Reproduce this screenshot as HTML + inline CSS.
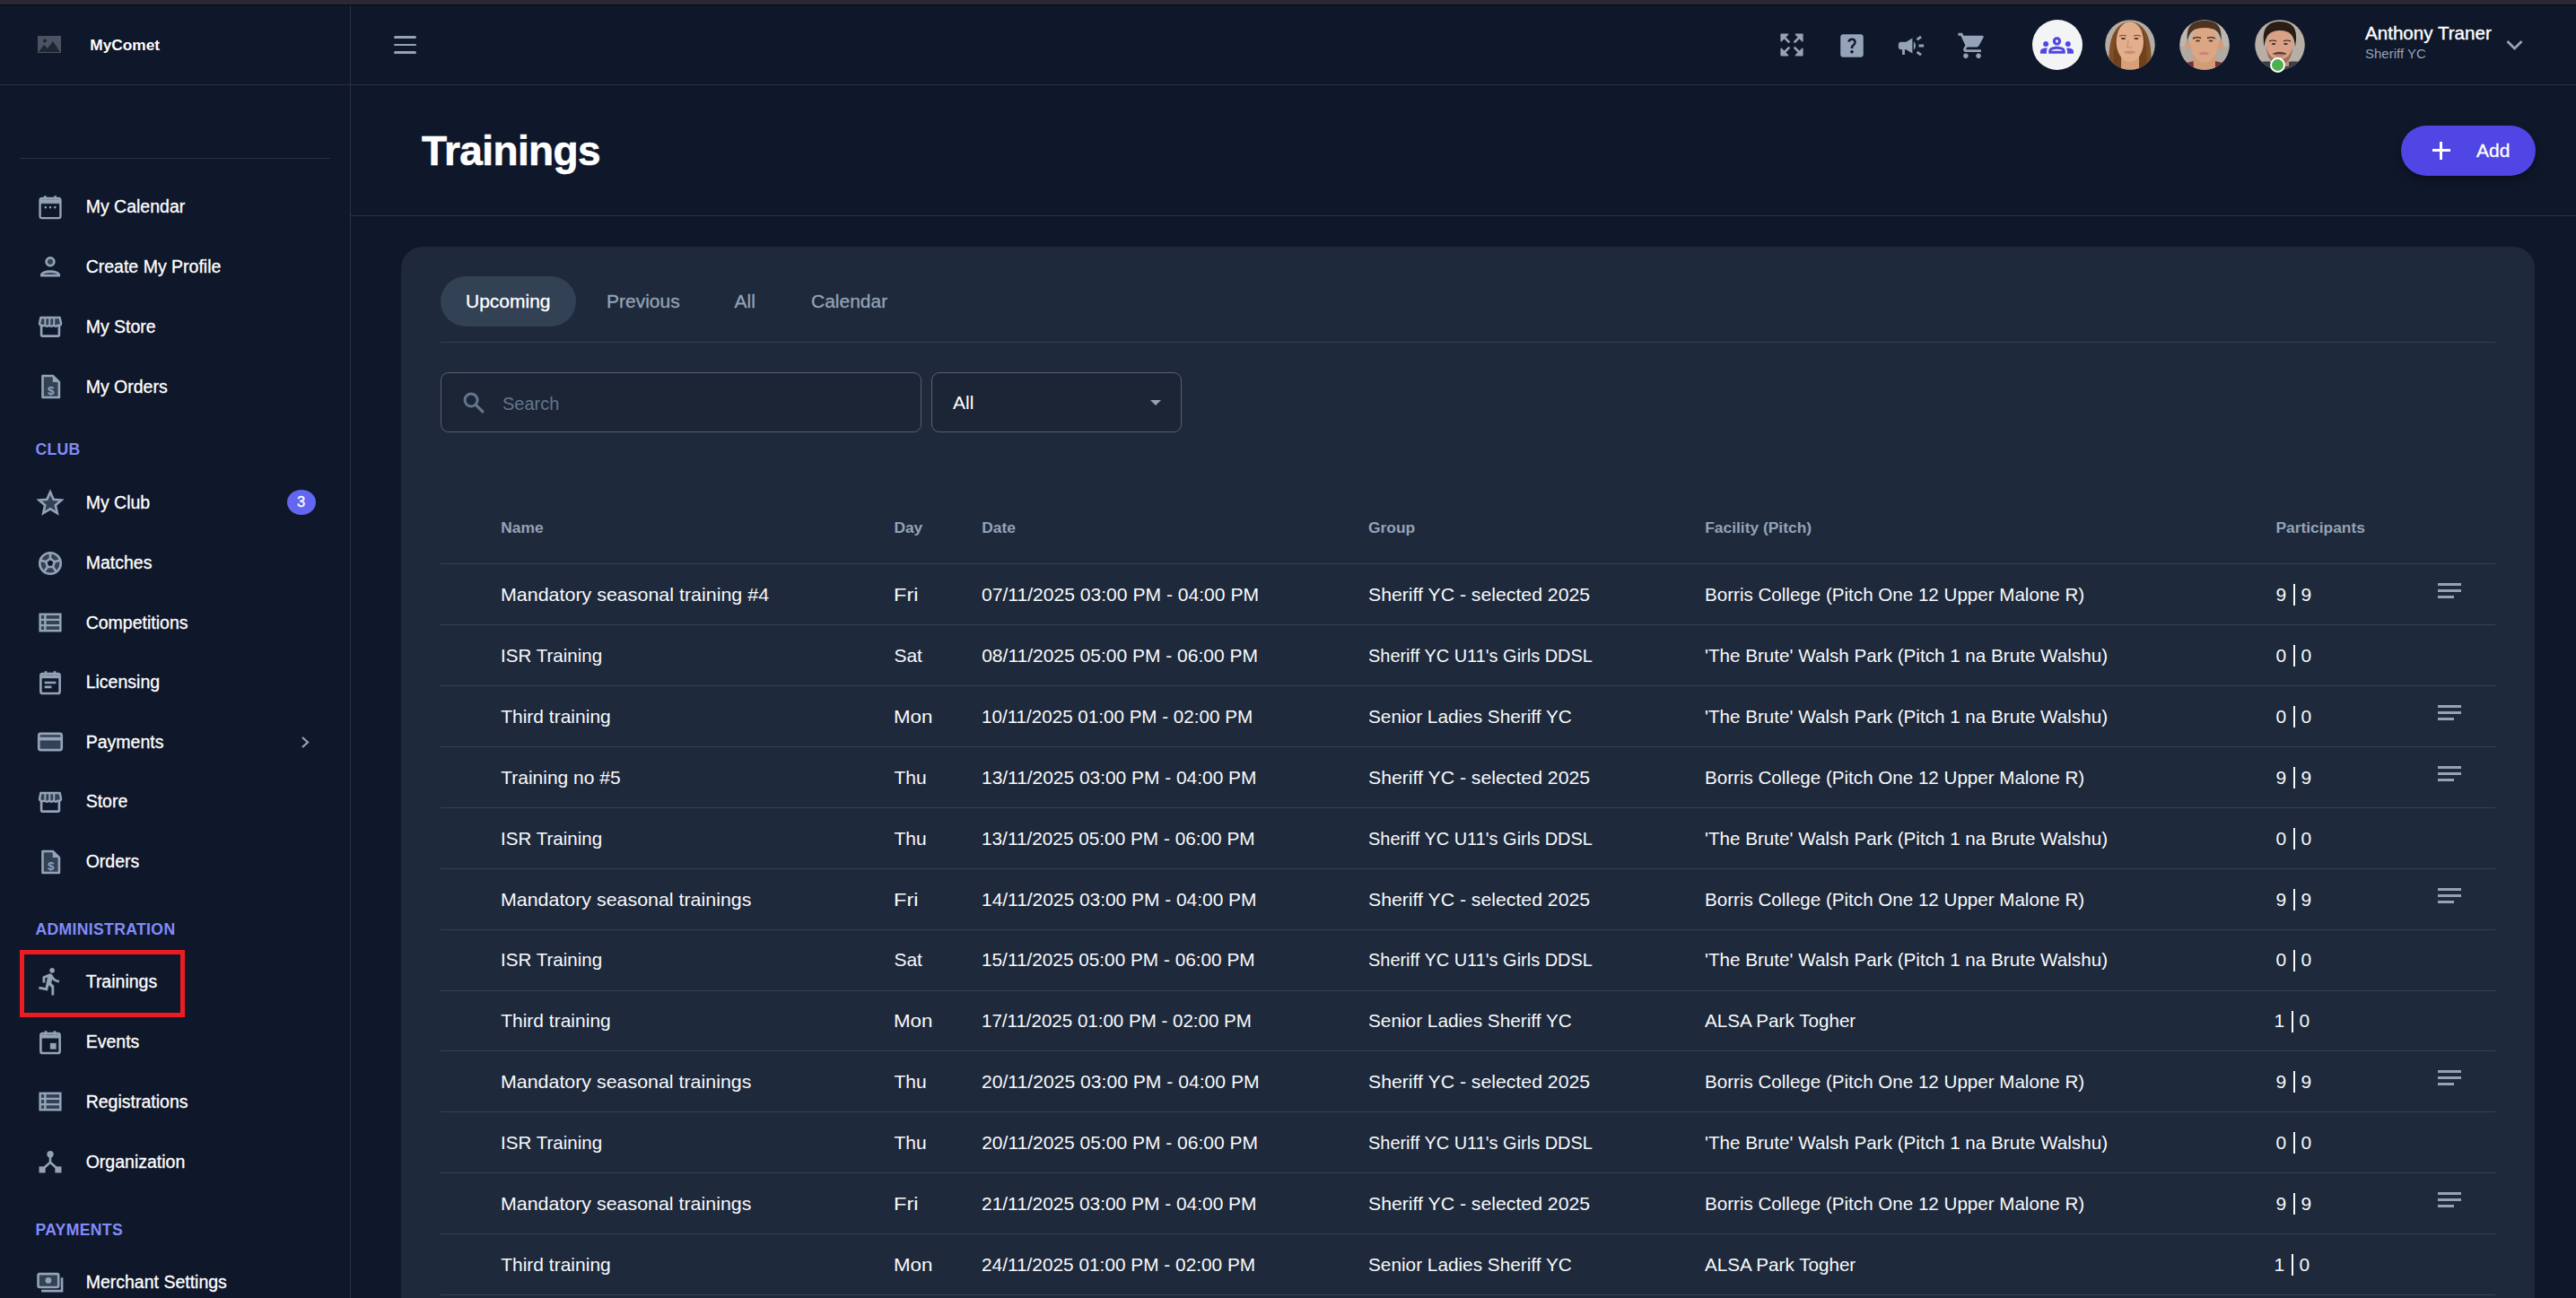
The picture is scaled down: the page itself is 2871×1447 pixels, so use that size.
<!DOCTYPE html>
<html><head><meta charset="utf-8"><title>Trainings</title>
<style>
html,body{margin:0;padding:0;}
html{width:2871px;height:1447px;overflow:hidden;background:#0f172a;}
body{width:2871px;height:1447px;overflow:hidden;background:#0f172a;position:relative;font-family:"Liberation Sans", sans-serif;}
.t{position:absolute;white-space:pre;line-height:1;font-family:"Liberation Sans", sans-serif;}
svg{overflow:visible}
</style></head><body>
<div style="position:absolute;left:0px;top:0px;width:2871px;height:5px;background:#2a2933"></div>
<div style="position:absolute;left:0px;top:5px;width:2871px;height:1px;background:#0a0a0c"></div>
<div style="position:absolute;left:390px;top:6px;width:1px;height:1441px;background:#2b3041"></div>
<div style="position:absolute;left:0px;top:94px;width:2871px;height:1px;background:#2b3041"></div>
<div style="position:absolute;left:22px;top:176px;width:346px;height:1px;background:#2b3041"></div>
<div style="position:absolute;left:391px;top:240px;width:2480px;height:1px;background:#2b3041"></div>
<svg style="position:absolute;left:42px;top:40px;" width="26" height="19" viewBox="0 0 26 19"><rect x="0" y="0" width="26" height="19" fill="#4b5262"/><circle cx="8" cy="5.5" r="2" fill="#1f2533"/><path d="M1 18 L7 10 L11 14 L17 6 L25 18 Z" fill="#1f2533"/></svg>
<div class="t" style="left:100.3px;top:42.09px;font-size:17.3px;color:#fff;font-weight:bold;">MyComet</div>
<div style="position:absolute;left:439px;top:40px;width:25px;height:2.6px;background:#94a3b8;border-radius:2px"></div>
<div style="position:absolute;left:439px;top:48.5px;width:25px;height:2.6px;background:#94a3b8;border-radius:2px"></div>
<div style="position:absolute;left:439px;top:57px;width:25px;height:2.6px;background:#94a3b8;border-radius:2px"></div>
<svg style="position:absolute;left:1983.6px;top:36.8px;" width="26" height="26" viewBox="0 0 26 26"><g transform=""><path d="M1.2 1.2 H8.6 L1.2 8.6 Z" fill="#94a3b8" stroke="#94a3b8" stroke-width="1.6" stroke-linejoin="round"/><path d="M2.5 2.5 L9.6 9.6" stroke="#94a3b8" stroke-width="2.7" stroke-linecap="round"/></g><g transform="translate(26 0) scale(-1 1)"><path d="M1.2 1.2 H8.6 L1.2 8.6 Z" fill="#94a3b8" stroke="#94a3b8" stroke-width="1.6" stroke-linejoin="round"/><path d="M2.5 2.5 L9.6 9.6" stroke="#94a3b8" stroke-width="2.7" stroke-linecap="round"/></g><g transform="translate(0 26) scale(1 -1)"><path d="M1.2 1.2 H8.6 L1.2 8.6 Z" fill="#94a3b8" stroke="#94a3b8" stroke-width="1.6" stroke-linejoin="round"/><path d="M2.5 2.5 L9.6 9.6" stroke="#94a3b8" stroke-width="2.7" stroke-linecap="round"/></g><g transform="translate(26 26) scale(-1 -1)"><path d="M1.2 1.2 H8.6 L1.2 8.6 Z" fill="#94a3b8" stroke="#94a3b8" stroke-width="1.6" stroke-linejoin="round"/><path d="M2.5 2.5 L9.6 9.6" stroke="#94a3b8" stroke-width="2.7" stroke-linecap="round"/></g></svg>
<svg style="position:absolute;left:2046.5px;top:33.6px;" width="34" height="34" viewBox="0 0 24 24"><path d="M19 3H5c-1.1 0-2 .9-2 2v14c0 1.1.9 2 2 2h14c1.1 0 2-.9 2-2V5c0-1.1-.9-2-2-2zm-6.99 15c-.7 0-1.26-.56-1.26-1.26 0-.71.56-1.25 1.26-1.25.71 0 1.25.54 1.25 1.25-.01.69-.54 1.26-1.25 1.26zm3.01-7.4c-.76 1.11-1.48 1.46-1.87 2.17-.16.29-.22.48-.22 1.41h-1.82c0-.49-.08-1.29.31-1.98.49-.87 1.42-1.39 1.96-2.16.57-.81.25-2.33-1.37-2.33-1.06 0-1.58.8-1.8 1.48l-1.65-.7C9.02 7.14 10.3 6 12.01 6c1.42 0 2.39.65 2.89 1.46.42.7.67 2.01.01 3.14z" fill="#94a3b8"/></svg>
<svg style="position:absolute;left:2113.2px;top:33.9px;" width="34" height="34" viewBox="0 0 24 24"><path d="M18 11v2h4v-2h-4zm-2 6.61c.96.71 2.21 1.65 3.2 2.39.4-.53.8-1.07 1.2-1.6-.99-.74-2.24-1.68-3.2-2.4-.4.54-.8 1.08-1.2 1.61zM20.4 5.6c-.4-.53-.8-1.07-1.2-1.6-.99.74-2.24 1.68-3.2 2.4.4.53.8 1.07 1.2 1.6.96-.72 2.21-1.65 3.2-2.4zM4 9c-1.1 0-2 .9-2 2v2c0 1.1.9 2 2 2h1v4h2v-4h1l5 3V6L8 9H4zm11.5 3c0-1.33-.58-2.53-1.5-3.35v6.69c.92-.81 1.5-2.01 1.5-3.34z" fill="#94a3b8"/></svg>
<svg style="position:absolute;left:2180.6px;top:34.2px;" width="34" height="34" viewBox="0 0 24 24"><path d="M7 18c-1.1 0-1.99.9-1.99 2S5.9 22 7 22s2-.9 2-2-.9-2-2-2zM1 2v2h2l3.6 7.59-1.35 2.45c-.16.28-.25.61-.25.96 0 1.1.9 2 2 2h12v-2H7.42c-.14 0-.25-.11-.25-.25l.03-.12.9-1.63h7.45c.75 0 1.41-.41 1.75-1.03l3.58-6.49c.08-.14.12-.31.12-.48 0-.55-.45-1-1-1H5.21l-.94-2H1zm16 16c-1.1 0-1.99.9-1.99 2s.89 2 1.99 2 2-.9 2-2-.9-2-2-2z" fill="#94a3b8"/></svg>
<div style="position:absolute;left:2265px;top:22px;width:56px;height:56px;background:#f3f4f6;border-radius:50%"></div>
<svg style="position:absolute;left:2274.2px;top:31.7px;" width="37" height="37" viewBox="0 0 24 24"><path d="M4 13c1.1 0 2-.9 2-2s-.9-2-2-2-2 .9-2 2 .9 2 2 2zm1.13 1.1c-.37-.06-.74-.1-1.13-.1-.99 0-1.93.21-2.78.58C.48 14.9 0 15.62 0 16.43V18h4.5v-1.61c0-.83.23-1.61.63-2.29zM20 13c1.1 0 2-.9 2-2s-.9-2-2-2-2 .9-2 2 .9 2 2 2zm4 3.43c0-.81-.48-1.53-1.22-1.85-.85-.37-1.79-.58-2.78-.58-.39 0-.76.04-1.13.1.4.68.63 1.46.63 2.29V18H24v-1.57zm-7.76-2.78c-1.17-.52-2.61-.9-4.24-.9-1.63 0-3.07.39-4.24.9C6.68 14.13 6 15.21 6 16.39V18h12v-1.61c0-1.18-.68-2.26-1.76-2.74zM8.07 16c.09-.23.13-.39.91-.69.97-.38 1.99-.56 3.02-.56s2.05.18 3.02.56c.77.3.81.46.91.69H8.07zM12 8c.55 0 1 .45 1 1s-.45 1-1 1-1-.45-1-1 .45-1 1-1m0-2c-1.66 0-3 1.34-3 3s1.34 3 3 3 3-1.34 3-3-1.34-3-3-3z" fill="#4f46e5"/></svg>
<svg style="position:absolute;left:2345.5px;top:22px" width="56" height="56" viewBox="0 0 56 56"><clipPath id="c2373"><circle cx="28" cy="28" r="27.8"/></clipPath><g clip-path="url(#c2373)"><rect width="56" height="56" fill="#b3ada5"/><path d="M5 56 C3 30 6 5 28 1.5 C50 5 53 30 51 56 Z" fill="#7f4e26"/><path d="M10 56 C9 35 11 20 13 14 L43 14 C45 20 47 35 46 56Z" fill="#5e3416" opacity="0.45"/><rect x="18" y="38" width="20" height="18" fill="#d6a07a"/><ellipse cx="27.8" cy="24.5" rx="15.2" ry="22.5" fill="#e2ae8c"/><path d="M16 18.3 Q20.5 16.3 24 18" stroke="#6b4228" stroke-width="1" fill="none"/><path d="M32 18 Q35.5 16.3 40 18.3" stroke="#6b4228" stroke-width="1" fill="none"/><ellipse cx="20.5" cy="21" rx="2.6" ry="1.1" fill="#4a2f20"/><ellipse cx="35" cy="21" rx="2.6" ry="1.1" fill="#4a2f20"/><path d="M26 23 L25 31 L30 31" stroke="#c48a68" stroke-width="1" fill="none"/><ellipse cx="27.8" cy="36.3" rx="6.3" ry="1.7" fill="#cb8878"/></g></svg>
<svg style="position:absolute;left:2429px;top:22px" width="56" height="56" viewBox="0 0 56 56"><clipPath id="c2457"><circle cx="28" cy="28" r="27.8"/></clipPath><g clip-path="url(#c2457)"><rect width="56" height="56" fill="#bcb7b0"/><rect y="30" width="56" height="26" fill="#a9a198" opacity="0.6"/><rect x="15" y="38" width="25" height="18" fill="#cf9b78"/><path d="M0 56 L0 49 C8 48 13 47 15.5 46 L16 56 Z" fill="#7a2a30"/><path d="M56 56 L56 49 C48 48 43 47 40 46 L40 56 Z" fill="#7a2a30"/><ellipse cx="9.5" cy="28" rx="3" ry="5.5" fill="#d39c7a"/><ellipse cx="46" cy="28" rx="3" ry="5.5" fill="#d39c7a"/><ellipse cx="27.8" cy="27" rx="15" ry="21" fill="#dca583"/><path d="M9 24 C7 6 15 1 28 1 C41 1 48 6 46.5 24 C45 14 41 9 28 9 C15 9 11 14 9 24 Z" fill="#4d3420"/><path d="M15 21 Q20 18.5 24 20.5" stroke="#3e2a1c" stroke-width="1.4" fill="none"/><path d="M31 20.5 Q35.5 18.5 40 21" stroke="#3e2a1c" stroke-width="1.4" fill="none"/><ellipse cx="20.5" cy="23.5" rx="2.5" ry="1.1" fill="#4c3a2e"/><ellipse cx="35" cy="23.5" rx="2.5" ry="1.1" fill="#4c3a2e"/><ellipse cx="27.5" cy="37.5" rx="5.5" ry="1.6" fill="#c88574"/></g></svg>
<svg style="position:absolute;left:2513px;top:22px" width="56" height="56" viewBox="0 0 56 56"><clipPath id="c2541"><circle cx="28" cy="28" r="27.8"/></clipPath><g clip-path="url(#c2541)"><rect width="56" height="56" fill="#b7afa6"/><path d="M0 56 L0 47 C8 47 14 46 18 47 L38 47 C44 46 50 47 56 48 L56 56Z" fill="#3b3e45"/><rect x="18" y="40" width="20" height="12" fill="#c58f70"/><ellipse cx="27.5" cy="29" rx="15" ry="20.5" fill="#d9a187"/><path d="M13 30 C13 44 20 50 27.5 50 C35 50 42 44 42 30 C40 40 35 44 27.5 44 C20 44 15 40 13 30Z" fill="#6b4a3a" opacity="0.55"/><path d="M10.5 30 C7 9 15 2 28 2 C42 2 49 9 45 30 C44 18 40 12 28 12 C16 12 12 18 10.5 30 Z" fill="#2a1d15"/><path d="M16 24 Q20.5 22 24 24" stroke="#2e2019" stroke-width="1.2" fill="none"/><path d="M32 24 Q35.5 22 40 24" stroke="#2e2019" stroke-width="1.2" fill="none"/><ellipse cx="21" cy="27" rx="2.3" ry="1.1" fill="#3a2a22"/><ellipse cx="34.5" cy="27" rx="2.3" ry="1.1" fill="#3a2a22"/><path d="M20.5 38 Q27.5 35 35 38 Q27.5 37.5 20.5 38Z" fill="#5a3d30" stroke="#5a3d30" stroke-width="1.3"/><ellipse cx="27.5" cy="40" rx="5" ry="1.5" fill="#c2807a"/></g></svg>
<div style="position:absolute;left:2530px;top:63.5px;width:17px;height:17px;background:#4caf50;border:2px solid #fff;border-radius:50%;box-sizing:border-box"></div>
<div class="t" style="left:2636px;top:27.49px;font-size:20.6px;color:#fff;font-weight:normal;-webkit-text-stroke:0.35px #fff">Anthony Traner</div>
<div class="t" style="left:2636px;top:52.25px;font-size:15px;color:#94a3b8;font-weight:normal;">Sheriff YC</div>
<svg style="position:absolute;left:2792px;top:43px;" width="21" height="15" viewBox="0 0 21 15"><path d="M2.5 3 L10.5 11 L18.5 3" fill="none" stroke="#94a3b8" stroke-width="2.8"/></svg>
<div class="t" style="left:470px;top:145.40px;font-size:46px;color:#fff;font-weight:bold;letter-spacing:-0.6px;-webkit-text-stroke:0.6px #fff">Trainings</div>
<div style="position:absolute;left:2676px;top:140px;width:150px;height:56px;background:#4f46e5;border-radius:28px;box-shadow:0 4px 8px rgba(0,0,0,0.35)"></div>
<div style="position:absolute;left:2710.5px;top:166.3px;width:20px;height:3px;background:#fff"></div>
<div style="position:absolute;left:2719px;top:157.8px;width:3px;height:20px;background:#fff"></div>
<div class="t" style="left:2760px;top:157.15px;font-size:21px;color:#fff;font-weight:normal;-webkit-text-stroke:0.3px #fff">Add</div>
<div style="position:absolute;left:447px;top:275px;width:2378px;height:1172px;background:#1e293b;border-radius:24px 24px 0 0"></div>
<div style="position:absolute;left:491px;top:308px;width:151px;height:56px;background:#334155;border-radius:28px"></div>
<div class="t" style="left:519px;top:325.15px;font-size:21px;color:#fff;font-weight:normal;-webkit-text-stroke:0.3px #fff">Upcoming</div>
<div class="t" style="left:676px;top:325.15px;font-size:21px;color:#94a3b8;font-weight:normal;-webkit-text-stroke:0.3px #94a3b8">Previous</div>
<div class="t" style="left:818.5px;top:325.15px;font-size:21px;color:#94a3b8;font-weight:normal;-webkit-text-stroke:0.3px #94a3b8">All</div>
<div class="t" style="left:904px;top:325.15px;font-size:21px;color:#94a3b8;font-weight:normal;-webkit-text-stroke:0.3px #94a3b8">Calendar</div>
<div style="position:absolute;left:491px;top:381px;width:2290px;height:1px;background:#374151"></div>
<div style="position:absolute;left:491px;top:415px;width:536px;height:67px;border:1.5px solid #536177;border-radius:9px;box-sizing:border-box;background:#1b2535"></div>
<svg style="position:absolute;left:514px;top:435px;" width="28" height="28" viewBox="0 0 24 24"><circle cx="9.5" cy="9.5" r="6" fill="none" stroke="#64748b" stroke-width="2.6"/><path d="M14 14 L20.5 20.5" stroke="#64748b" stroke-width="2.8" stroke-linecap="round"/></svg>
<div class="t" style="left:560px;top:440.00px;font-size:20px;color:#64748b;font-weight:normal;">Search</div>
<div style="position:absolute;left:1038px;top:415px;width:279px;height:67px;border:1.5px solid #536177;border-radius:9px;box-sizing:border-box;background:#1b2535"></div>
<div class="t" style="left:1062px;top:438.15px;font-size:21px;color:#fff;font-weight:normal;">All</div>
<svg style="position:absolute;left:1281px;top:445px;" width="14" height="8" viewBox="0 0 14 8"><path d="M1 1 L13 1 L7 7 Z" fill="#94a3b8"/></svg>
<div class="t" style="left:558.2px;top:580.21px;font-size:17.4px;color:#94a3b8;font-weight:bold;">Name</div>
<div class="t" style="left:996.4px;top:580.21px;font-size:17.4px;color:#94a3b8;font-weight:bold;">Day</div>
<div class="t" style="left:1094.2px;top:580.21px;font-size:17.4px;color:#94a3b8;font-weight:bold;">Date</div>
<div class="t" style="left:1525px;top:580.21px;font-size:17.4px;color:#94a3b8;font-weight:bold;">Group</div>
<div class="t" style="left:1900.2px;top:580.21px;font-size:17.4px;color:#94a3b8;font-weight:bold;">Facility (Pitch)</div>
<div class="t" style="left:2536.4px;top:580.21px;font-size:17.4px;color:#94a3b8;font-weight:bold;">Participants</div>
<div style="position:absolute;left:491px;top:628px;width:2290px;height:1px;background:#374151"></div>
<div style="position:absolute;left:491px;top:696px;width:2290px;height:1px;background:#374151"></div>
<div style="position:absolute;left:491px;top:764px;width:2290px;height:1px;background:#374151"></div>
<div style="position:absolute;left:491px;top:832px;width:2290px;height:1px;background:#374151"></div>
<div style="position:absolute;left:491px;top:900px;width:2290px;height:1px;background:#374151"></div>
<div style="position:absolute;left:491px;top:968px;width:2290px;height:1px;background:#374151"></div>
<div style="position:absolute;left:491px;top:1036px;width:2290px;height:1px;background:#374151"></div>
<div style="position:absolute;left:491px;top:1104px;width:2290px;height:1px;background:#374151"></div>
<div style="position:absolute;left:491px;top:1171px;width:2290px;height:1px;background:#374151"></div>
<div style="position:absolute;left:491px;top:1239px;width:2290px;height:1px;background:#374151"></div>
<div style="position:absolute;left:491px;top:1307px;width:2290px;height:1px;background:#374151"></div>
<div style="position:absolute;left:491px;top:1375px;width:2290px;height:1px;background:#374151"></div>
<div style="position:absolute;left:491px;top:1443px;width:2290px;height:1px;background:#374151"></div>
<div class="t" style="left:558.2px;top:652.00px;font-size:21px;color:#f8fafc;font-weight:normal;;transform:scaleX(1.0206);transform-origin:0 0">Mandatory seasonal training #4</div>
<div class="t" style="left:996.4px;top:652.00px;font-size:21px;color:#f8fafc;font-weight:normal;;transform:scaleX(1.1238);transform-origin:0 0">Fri</div>
<div class="t" style="left:1094.2px;top:652.00px;font-size:21px;color:#f8fafc;font-weight:normal;;transform:scaleX(1.0039);transform-origin:0 0">07/11/2025 03:00 PM - 04:00 PM</div>
<div class="t" style="left:1525px;top:652.00px;font-size:21px;color:#f8fafc;font-weight:normal;;transform:scaleX(1.0111);transform-origin:0 0">Sheriff YC - selected 2025</div>
<div class="t" style="left:1900.2px;top:652.00px;font-size:21px;color:#f8fafc;font-weight:normal;;transform:scaleX(0.9800);transform-origin:0 0">Borris College (Pitch One 12 Upper Malone R)</div>
<div class="t" style="left:2536.4px;top:652.00px;font-size:21px;color:#f8fafc;font-weight:normal;">9</div>
<div style="position:absolute;left:2556px;top:651px;width:2px;height:24px;background:#f8fafc"></div>
<div class="t" style="left:2564.6px;top:652.00px;font-size:21px;color:#f8fafc;font-weight:normal;">9</div>
<div style="position:absolute;left:2717px;top:650px;width:26px;height:3px;background:#94a3b8"></div>
<div style="position:absolute;left:2717px;top:657px;width:26px;height:3px;background:#94a3b8"></div>
<div style="position:absolute;left:2717px;top:664px;width:18px;height:3px;background:#94a3b8"></div>
<div class="t" style="left:558.2px;top:719.90px;font-size:21px;color:#f8fafc;font-weight:normal;;transform:scaleX(0.9795);transform-origin:0 0">ISR Training</div>
<div class="t" style="left:996.4px;top:719.90px;font-size:21px;color:#f8fafc;font-weight:normal;">Sat</div>
<div class="t" style="left:1094.2px;top:719.90px;font-size:21px;color:#f8fafc;font-weight:normal;">08/11/2025 05:00 PM - 06:00 PM</div>
<div class="t" style="left:1525px;top:719.90px;font-size:21px;color:#f8fafc;font-weight:normal;;transform:scaleX(0.9496);transform-origin:0 0">Sheriff YC U11&#x27;s Girls DDSL</div>
<div class="t" style="left:1900.2px;top:719.90px;font-size:21px;color:#f8fafc;font-weight:normal;;transform:scaleX(0.9826);transform-origin:0 0">&#x27;The Brute&#x27; Walsh Park (Pitch 1 na Brute Walshu)</div>
<div class="t" style="left:2536.4px;top:719.90px;font-size:21px;color:#f8fafc;font-weight:normal;">0</div>
<div style="position:absolute;left:2556px;top:719px;width:2px;height:24px;background:#f8fafc"></div>
<div class="t" style="left:2564.6px;top:719.90px;font-size:21px;color:#f8fafc;font-weight:normal;">0</div>
<div class="t" style="left:558.2px;top:787.80px;font-size:21px;color:#f8fafc;font-weight:normal;">Third training</div>
<div class="t" style="left:996.4px;top:787.80px;font-size:21px;color:#f8fafc;font-weight:normal;;transform:scaleX(1.0632);transform-origin:0 0">Mon</div>
<div class="t" style="left:1094.2px;top:787.80px;font-size:21px;color:#f8fafc;font-weight:normal;;transform:scaleX(0.9813);transform-origin:0 0">10/11/2025 01:00 PM - 02:00 PM</div>
<div class="t" style="left:1525px;top:787.80px;font-size:21px;color:#f8fafc;font-weight:normal;;transform:scaleX(0.9894);transform-origin:0 0">Senior Ladies Sheriff YC</div>
<div class="t" style="left:1900.2px;top:787.80px;font-size:21px;color:#f8fafc;font-weight:normal;;transform:scaleX(0.9826);transform-origin:0 0">&#x27;The Brute&#x27; Walsh Park (Pitch 1 na Brute Walshu)</div>
<div class="t" style="left:2536.4px;top:787.80px;font-size:21px;color:#f8fafc;font-weight:normal;">0</div>
<div style="position:absolute;left:2556px;top:787px;width:2px;height:24px;background:#f8fafc"></div>
<div class="t" style="left:2564.6px;top:787.80px;font-size:21px;color:#f8fafc;font-weight:normal;">0</div>
<div style="position:absolute;left:2717px;top:786px;width:26px;height:3px;background:#94a3b8"></div>
<div style="position:absolute;left:2717px;top:793px;width:26px;height:3px;background:#94a3b8"></div>
<div style="position:absolute;left:2717px;top:800px;width:18px;height:3px;background:#94a3b8"></div>
<div class="t" style="left:558.2px;top:855.70px;font-size:21px;color:#f8fafc;font-weight:normal;">Training no #5</div>
<div class="t" style="left:996.4px;top:855.70px;font-size:21px;color:#f8fafc;font-weight:normal;">Thu</div>
<div class="t" style="left:1094.2px;top:855.70px;font-size:21px;color:#f8fafc;font-weight:normal;;transform:scaleX(0.9957);transform-origin:0 0">13/11/2025 03:00 PM - 04:00 PM</div>
<div class="t" style="left:1525px;top:855.70px;font-size:21px;color:#f8fafc;font-weight:normal;;transform:scaleX(1.0111);transform-origin:0 0">Sheriff YC - selected 2025</div>
<div class="t" style="left:1900.2px;top:855.70px;font-size:21px;color:#f8fafc;font-weight:normal;;transform:scaleX(0.9800);transform-origin:0 0">Borris College (Pitch One 12 Upper Malone R)</div>
<div class="t" style="left:2536.4px;top:855.70px;font-size:21px;color:#f8fafc;font-weight:normal;">9</div>
<div style="position:absolute;left:2556px;top:855px;width:2px;height:24px;background:#f8fafc"></div>
<div class="t" style="left:2564.6px;top:855.70px;font-size:21px;color:#f8fafc;font-weight:normal;">9</div>
<div style="position:absolute;left:2717px;top:854px;width:26px;height:3px;background:#94a3b8"></div>
<div style="position:absolute;left:2717px;top:861px;width:26px;height:3px;background:#94a3b8"></div>
<div style="position:absolute;left:2717px;top:868px;width:18px;height:3px;background:#94a3b8"></div>
<div class="t" style="left:558.2px;top:923.60px;font-size:21px;color:#f8fafc;font-weight:normal;;transform:scaleX(0.9795);transform-origin:0 0">ISR Training</div>
<div class="t" style="left:996.4px;top:923.60px;font-size:21px;color:#f8fafc;font-weight:normal;">Thu</div>
<div class="t" style="left:1094.2px;top:923.60px;font-size:21px;color:#f8fafc;font-weight:normal;;transform:scaleX(0.9895);transform-origin:0 0">13/11/2025 05:00 PM - 06:00 PM</div>
<div class="t" style="left:1525px;top:923.60px;font-size:21px;color:#f8fafc;font-weight:normal;;transform:scaleX(0.9496);transform-origin:0 0">Sheriff YC U11&#x27;s Girls DDSL</div>
<div class="t" style="left:1900.2px;top:923.60px;font-size:21px;color:#f8fafc;font-weight:normal;;transform:scaleX(0.9826);transform-origin:0 0">&#x27;The Brute&#x27; Walsh Park (Pitch 1 na Brute Walshu)</div>
<div class="t" style="left:2536.4px;top:923.60px;font-size:21px;color:#f8fafc;font-weight:normal;">0</div>
<div style="position:absolute;left:2556px;top:923px;width:2px;height:24px;background:#f8fafc"></div>
<div class="t" style="left:2564.6px;top:923.60px;font-size:21px;color:#f8fafc;font-weight:normal;">0</div>
<div class="t" style="left:558.2px;top:991.50px;font-size:21px;color:#f8fafc;font-weight:normal;;transform:scaleX(1.0184);transform-origin:0 0">Mandatory seasonal trainings</div>
<div class="t" style="left:996.4px;top:991.50px;font-size:21px;color:#f8fafc;font-weight:normal;;transform:scaleX(1.1238);transform-origin:0 0">Fri</div>
<div class="t" style="left:1094.2px;top:991.50px;font-size:21px;color:#f8fafc;font-weight:normal;;transform:scaleX(0.9957);transform-origin:0 0">14/11/2025 03:00 PM - 04:00 PM</div>
<div class="t" style="left:1525px;top:991.50px;font-size:21px;color:#f8fafc;font-weight:normal;;transform:scaleX(1.0111);transform-origin:0 0">Sheriff YC - selected 2025</div>
<div class="t" style="left:1900.2px;top:991.50px;font-size:21px;color:#f8fafc;font-weight:normal;;transform:scaleX(0.9800);transform-origin:0 0">Borris College (Pitch One 12 Upper Malone R)</div>
<div class="t" style="left:2536.4px;top:991.50px;font-size:21px;color:#f8fafc;font-weight:normal;">9</div>
<div style="position:absolute;left:2556px;top:991px;width:2px;height:24px;background:#f8fafc"></div>
<div class="t" style="left:2564.6px;top:991.50px;font-size:21px;color:#f8fafc;font-weight:normal;">9</div>
<div style="position:absolute;left:2717px;top:990px;width:26px;height:3px;background:#94a3b8"></div>
<div style="position:absolute;left:2717px;top:997px;width:26px;height:3px;background:#94a3b8"></div>
<div style="position:absolute;left:2717px;top:1004px;width:18px;height:3px;background:#94a3b8"></div>
<div class="t" style="left:558.2px;top:1059.40px;font-size:21px;color:#f8fafc;font-weight:normal;;transform:scaleX(0.9795);transform-origin:0 0">ISR Training</div>
<div class="t" style="left:996.4px;top:1059.40px;font-size:21px;color:#f8fafc;font-weight:normal;">Sat</div>
<div class="t" style="left:1094.2px;top:1059.40px;font-size:21px;color:#f8fafc;font-weight:normal;;transform:scaleX(0.9895);transform-origin:0 0">15/11/2025 05:00 PM - 06:00 PM</div>
<div class="t" style="left:1525px;top:1059.40px;font-size:21px;color:#f8fafc;font-weight:normal;;transform:scaleX(0.9496);transform-origin:0 0">Sheriff YC U11&#x27;s Girls DDSL</div>
<div class="t" style="left:1900.2px;top:1059.40px;font-size:21px;color:#f8fafc;font-weight:normal;;transform:scaleX(0.9826);transform-origin:0 0">&#x27;The Brute&#x27; Walsh Park (Pitch 1 na Brute Walshu)</div>
<div class="t" style="left:2536.4px;top:1059.40px;font-size:21px;color:#f8fafc;font-weight:normal;">0</div>
<div style="position:absolute;left:2556px;top:1059px;width:2px;height:24px;background:#f8fafc"></div>
<div class="t" style="left:2564.6px;top:1059.40px;font-size:21px;color:#f8fafc;font-weight:normal;">0</div>
<div class="t" style="left:558.2px;top:1127.30px;font-size:21px;color:#f8fafc;font-weight:normal;">Third training</div>
<div class="t" style="left:996.4px;top:1127.30px;font-size:21px;color:#f8fafc;font-weight:normal;;transform:scaleX(1.0632);transform-origin:0 0">Mon</div>
<div class="t" style="left:1094.2px;top:1127.30px;font-size:21px;color:#f8fafc;font-weight:normal;;transform:scaleX(0.9774);transform-origin:0 0">17/11/2025 01:00 PM - 02:00 PM</div>
<div class="t" style="left:1525px;top:1127.30px;font-size:21px;color:#f8fafc;font-weight:normal;;transform:scaleX(0.9894);transform-origin:0 0">Senior Ladies Sheriff YC</div>
<div class="t" style="left:1900.2px;top:1127.30px;font-size:21px;color:#f8fafc;font-weight:normal;;transform:scaleX(0.9825);transform-origin:0 0">ALSA Park Togher</div>
<div class="t" style="left:2534.6px;top:1127.30px;font-size:21px;color:#f8fafc;font-weight:normal;">1</div>
<div style="position:absolute;left:2554px;top:1127px;width:2px;height:24px;background:#f8fafc"></div>
<div class="t" style="left:2562.6px;top:1127.30px;font-size:21px;color:#f8fafc;font-weight:normal;">0</div>
<div class="t" style="left:558.2px;top:1195.20px;font-size:21px;color:#f8fafc;font-weight:normal;;transform:scaleX(1.0184);transform-origin:0 0">Mandatory seasonal trainings</div>
<div class="t" style="left:996.4px;top:1195.20px;font-size:21px;color:#f8fafc;font-weight:normal;">Thu</div>
<div class="t" style="left:1094.2px;top:1195.20px;font-size:21px;color:#f8fafc;font-weight:normal;;transform:scaleX(1.0059);transform-origin:0 0">20/11/2025 03:00 PM - 04:00 PM</div>
<div class="t" style="left:1525px;top:1195.20px;font-size:21px;color:#f8fafc;font-weight:normal;;transform:scaleX(1.0111);transform-origin:0 0">Sheriff YC - selected 2025</div>
<div class="t" style="left:1900.2px;top:1195.20px;font-size:21px;color:#f8fafc;font-weight:normal;;transform:scaleX(0.9800);transform-origin:0 0">Borris College (Pitch One 12 Upper Malone R)</div>
<div class="t" style="left:2536.4px;top:1195.20px;font-size:21px;color:#f8fafc;font-weight:normal;">9</div>
<div style="position:absolute;left:2556px;top:1194px;width:2px;height:24px;background:#f8fafc"></div>
<div class="t" style="left:2564.6px;top:1195.20px;font-size:21px;color:#f8fafc;font-weight:normal;">9</div>
<div style="position:absolute;left:2717px;top:1193px;width:26px;height:3px;background:#94a3b8"></div>
<div style="position:absolute;left:2717px;top:1200px;width:26px;height:3px;background:#94a3b8"></div>
<div style="position:absolute;left:2717px;top:1207px;width:18px;height:3px;background:#94a3b8"></div>
<div class="t" style="left:558.2px;top:1263.10px;font-size:21px;color:#f8fafc;font-weight:normal;;transform:scaleX(0.9795);transform-origin:0 0">ISR Training</div>
<div class="t" style="left:996.4px;top:1263.10px;font-size:21px;color:#f8fafc;font-weight:normal;">Thu</div>
<div class="t" style="left:1094.2px;top:1263.10px;font-size:21px;color:#f8fafc;font-weight:normal;">20/11/2025 05:00 PM - 06:00 PM</div>
<div class="t" style="left:1525px;top:1263.10px;font-size:21px;color:#f8fafc;font-weight:normal;;transform:scaleX(0.9496);transform-origin:0 0">Sheriff YC U11&#x27;s Girls DDSL</div>
<div class="t" style="left:1900.2px;top:1263.10px;font-size:21px;color:#f8fafc;font-weight:normal;;transform:scaleX(0.9826);transform-origin:0 0">&#x27;The Brute&#x27; Walsh Park (Pitch 1 na Brute Walshu)</div>
<div class="t" style="left:2536.4px;top:1263.10px;font-size:21px;color:#f8fafc;font-weight:normal;">0</div>
<div style="position:absolute;left:2556px;top:1262px;width:2px;height:24px;background:#f8fafc"></div>
<div class="t" style="left:2564.6px;top:1263.10px;font-size:21px;color:#f8fafc;font-weight:normal;">0</div>
<div class="t" style="left:558.2px;top:1331.00px;font-size:21px;color:#f8fafc;font-weight:normal;;transform:scaleX(1.0184);transform-origin:0 0">Mandatory seasonal trainings</div>
<div class="t" style="left:996.4px;top:1331.00px;font-size:21px;color:#f8fafc;font-weight:normal;;transform:scaleX(1.1238);transform-origin:0 0">Fri</div>
<div class="t" style="left:1094.2px;top:1331.00px;font-size:21px;color:#f8fafc;font-weight:normal;;transform:scaleX(0.9957);transform-origin:0 0">21/11/2025 03:00 PM - 04:00 PM</div>
<div class="t" style="left:1525px;top:1331.00px;font-size:21px;color:#f8fafc;font-weight:normal;;transform:scaleX(1.0111);transform-origin:0 0">Sheriff YC - selected 2025</div>
<div class="t" style="left:1900.2px;top:1331.00px;font-size:21px;color:#f8fafc;font-weight:normal;;transform:scaleX(0.9800);transform-origin:0 0">Borris College (Pitch One 12 Upper Malone R)</div>
<div class="t" style="left:2536.4px;top:1331.00px;font-size:21px;color:#f8fafc;font-weight:normal;">9</div>
<div style="position:absolute;left:2556px;top:1330px;width:2px;height:24px;background:#f8fafc"></div>
<div class="t" style="left:2564.6px;top:1331.00px;font-size:21px;color:#f8fafc;font-weight:normal;">9</div>
<div style="position:absolute;left:2717px;top:1329px;width:26px;height:3px;background:#94a3b8"></div>
<div style="position:absolute;left:2717px;top:1336px;width:26px;height:3px;background:#94a3b8"></div>
<div style="position:absolute;left:2717px;top:1343px;width:18px;height:3px;background:#94a3b8"></div>
<div class="t" style="left:558.2px;top:1398.90px;font-size:21px;color:#f8fafc;font-weight:normal;">Third training</div>
<div class="t" style="left:996.4px;top:1398.90px;font-size:21px;color:#f8fafc;font-weight:normal;;transform:scaleX(1.0632);transform-origin:0 0">Mon</div>
<div class="t" style="left:1094.2px;top:1398.90px;font-size:21px;color:#f8fafc;font-weight:normal;;transform:scaleX(0.9915);transform-origin:0 0">24/11/2025 01:00 PM - 02:00 PM</div>
<div class="t" style="left:1525px;top:1398.90px;font-size:21px;color:#f8fafc;font-weight:normal;;transform:scaleX(0.9894);transform-origin:0 0">Senior Ladies Sheriff YC</div>
<div class="t" style="left:1900.2px;top:1398.90px;font-size:21px;color:#f8fafc;font-weight:normal;;transform:scaleX(0.9825);transform-origin:0 0">ALSA Park Togher</div>
<div class="t" style="left:2534.6px;top:1398.90px;font-size:21px;color:#f8fafc;font-weight:normal;">1</div>
<div style="position:absolute;left:2554px;top:1398px;width:2px;height:24px;background:#f8fafc"></div>
<div class="t" style="left:2562.6px;top:1398.90px;font-size:21px;color:#f8fafc;font-weight:normal;">0</div>
<svg style="position:absolute;left:38.7px;top:213.7px;" width="34" height="34" viewBox="0 0 24 24"><rect x="4" y="5" width="16" height="15.5" rx="1.6" fill="#334155" stroke="#94a3b8" stroke-width="1.85"/><rect x="4.5" y="6" width="15" height="3" fill="#94a3b8"/><path d="M8 3v3M16 3v3" stroke="#94a3b8" stroke-width="1.85"/><rect x="4.8" y="9.6" width="14.4" height="10.1" fill="#0f172a"/><rect x="7.5" y="11.3" width="1.6" height="1.6" fill="#94a3b8"/><rect x="11.2" y="11.3" width="1.6" height="1.6" fill="#94a3b8"/><rect x="14.9" y="11.3" width="1.6" height="1.6" fill="#94a3b8"/></svg>
<div class="t" style="left:95.7px;top:221.12px;font-size:19.5px;color:#fff;font-weight:normal;-webkit-text-stroke:0.3px #fff">My Calendar</div>
<svg style="position:absolute;left:38.7px;top:280.5px;" width="34" height="34" viewBox="0 0 24 24"><circle cx="12" cy="7.6" r="3.1" fill="#334155" stroke="#94a3b8" stroke-width="1.85"/><path d="M5 18.5 C5 14.2 19 14.2 19 18.5 Z" fill="#334155" stroke="#94a3b8" stroke-width="1.85" stroke-linejoin="round"/></svg>
<div class="t" style="left:95.7px;top:287.93px;font-size:19.5px;color:#fff;font-weight:normal;-webkit-text-stroke:0.3px #fff">Create My Profile</div>
<svg style="position:absolute;left:38.7px;top:347.3px;" width="34" height="34" viewBox="0 0 24 24"><rect x="5" y="10" width="14" height="9.5" rx="1" fill="#0f172a" stroke="#94a3b8" stroke-width="1.85"/><path d="M4.5 5 H19.5 L20.5 9.5 C20.5 11 19 11.5 18 11 C17 12 15.5 12 14.6 11 C13.6 12 12 12 11.1 11 C10.1 12 8.6 12 7.7 11 C6.5 11.8 3.6 11.3 3.6 9.5 Z" fill="#334155" stroke="#94a3b8" stroke-width="1.75" stroke-linejoin="round"/><path d="M8 5.5v5M11.5 5.5v5M15 5.5v5" stroke="#94a3b8" stroke-width="1.4"/></svg>
<div class="t" style="left:95.7px;top:354.73px;font-size:19.5px;color:#fff;font-weight:normal;-webkit-text-stroke:0.3px #fff">My Store</div>
<svg style="position:absolute;left:38.7px;top:414.1px;" width="34" height="34" viewBox="0 0 24 24"><path d="M6 3.5 H14 L19 8.5 V20.5 H6 Z" fill="#334155" stroke="#94a3b8" stroke-width="1.85" stroke-linejoin="round"/><path d="M14 3.5 V8.5 H19" fill="#94a3b8"/><text x="12.5" y="18.2" font-size="9.5" font-weight="bold" font-family="Liberation Sans" text-anchor="middle" fill="#94a3b8">$</text></svg>
<div class="t" style="left:95.7px;top:421.53px;font-size:19.5px;color:#fff;font-weight:normal;-webkit-text-stroke:0.3px #fff">My Orders</div>
<svg style="position:absolute;left:38.7px;top:544.0px;" width="34" height="34" viewBox="0 0 24 24"><path d="M12 3.2 L14.6 9 L20.8 9.5 L16.1 13.6 L17.5 19.8 L12 16.5 L6.5 19.8 L7.9 13.6 L3.2 9.5 L9.4 9 Z" fill="#334155" stroke="#94a3b8" stroke-width="1.85" stroke-linejoin="miter"/></svg>
<div class="t" style="left:95.7px;top:551.42px;font-size:19.5px;color:#fff;font-weight:normal;-webkit-text-stroke:0.3px #fff">My Club</div>
<svg style="position:absolute;left:38.7px;top:610.6px;" width="34" height="34" viewBox="0 0 24 24"><circle cx="12" cy="12" r="8.3" fill="#334155" stroke="#94a3b8" stroke-width="1.8"/><path d="M12 8.3 L15.4 10.8 L14.1 14.8 H9.9 L8.6 10.8 Z" fill="#0f172a" stroke="#94a3b8" stroke-width="1.85"/><path d="M12 8.3V4M15.4 10.8L19.8 9.5M14.1 14.8L16.8 18.6M9.9 14.8L7.2 18.6M8.6 10.8L4.2 9.5" stroke="#94a3b8" stroke-width="1.85"/></svg>
<div class="t" style="left:95.7px;top:618.02px;font-size:19.5px;color:#fff;font-weight:normal;-webkit-text-stroke:0.3px #fff">Matches</div>
<svg style="position:absolute;left:38.7px;top:677.3px;" width="34" height="34" viewBox="0 0 24 24"><rect x="4" y="5.5" width="16" height="13" fill="#334155" stroke="#94a3b8" stroke-width="1.75"/><path d="M4 9.8H20M4 14.2H20M8 5.5V18.5" stroke="#94a3b8" stroke-width="1.75"/></svg>
<div class="t" style="left:95.7px;top:684.72px;font-size:19.5px;color:#fff;font-weight:normal;-webkit-text-stroke:0.3px #fff">Competitions</div>
<svg style="position:absolute;left:38.7px;top:743.8px;" width="34" height="34" viewBox="0 0 24 24"><rect x="4.5" y="5" width="15" height="15.5" rx="1.5" fill="#0f172a" stroke="#94a3b8" stroke-width="1.85"/><rect x="5" y="6" width="14" height="2.6" fill="#94a3b8"/><path d="M8.5 3v3M15.5 3v3" stroke="#94a3b8" stroke-width="1.85"/><path d="M7.5 12H16.5M7.5 15.5H13" stroke="#94a3b8" stroke-width="1.9"/></svg>
<div class="t" style="left:95.7px;top:751.22px;font-size:19.5px;color:#fff;font-weight:normal;-webkit-text-stroke:0.3px #fff">Licensing</div>
<svg style="position:absolute;left:38.7px;top:810.4px;" width="34" height="34" viewBox="0 0 24 24"><rect x="3" y="5.5" width="18" height="13" rx="1.5" fill="#334155" stroke="#94a3b8" stroke-width="1.9"/><rect x="3.5" y="8.3" width="17" height="2.6" fill="#94a3b8"/></svg>
<div class="t" style="left:95.7px;top:817.82px;font-size:19.5px;color:#fff;font-weight:normal;-webkit-text-stroke:0.3px #fff">Payments</div>
<svg style="position:absolute;left:38.7px;top:877.0px;" width="34" height="34" viewBox="0 0 24 24"><rect x="5" y="10" width="14" height="9.5" rx="1" fill="#0f172a" stroke="#94a3b8" stroke-width="1.85"/><path d="M4.5 5 H19.5 L20.5 9.5 C20.5 11 19 11.5 18 11 C17 12 15.5 12 14.6 11 C13.6 12 12 12 11.1 11 C10.1 12 8.6 12 7.7 11 C6.5 11.8 3.6 11.3 3.6 9.5 Z" fill="#334155" stroke="#94a3b8" stroke-width="1.75" stroke-linejoin="round"/><path d="M8 5.5v5M11.5 5.5v5M15 5.5v5" stroke="#94a3b8" stroke-width="1.4"/></svg>
<div class="t" style="left:95.7px;top:884.42px;font-size:19.5px;color:#fff;font-weight:normal;-webkit-text-stroke:0.3px #fff">Store</div>
<svg style="position:absolute;left:38.7px;top:943.6px;" width="34" height="34" viewBox="0 0 24 24"><path d="M6 3.5 H14 L19 8.5 V20.5 H6 Z" fill="#334155" stroke="#94a3b8" stroke-width="1.85" stroke-linejoin="round"/><path d="M14 3.5 V8.5 H19" fill="#94a3b8"/><text x="12.5" y="18.2" font-size="9.5" font-weight="bold" font-family="Liberation Sans" text-anchor="middle" fill="#94a3b8">$</text></svg>
<div class="t" style="left:95.7px;top:951.02px;font-size:19.5px;color:#fff;font-weight:normal;-webkit-text-stroke:0.3px #fff">Orders</div>
<svg style="position:absolute;left:38.7px;top:1077.4px;" width="34" height="34" viewBox="0 0 24 24"><path d="M13.49 5.48c1.1 0 2-.9 2-2s-.9-2-2-2-2 .9-2 2 .9 2 2 2zm-3.6 13.9l1-4.4 2.1 2v6h2v-7.5l-2.1-2 .6-3c1.3 1.5 3.3 2.5 5.5 2.5v-2c-1.9 0-3.5-1-4.3-2.4l-1-1.6c-.4-.6-1-1-1.7-1-.3 0-.5.1-.8.1l-5.2 2.2v4.7h2v-3.4l1.8-.7-1.6 8.1-4.9-1-.4 2 7 1.4z" fill="#94a3b8"/></svg>
<div class="t" style="left:95.7px;top:1084.83px;font-size:19.5px;color:#fff;font-weight:normal;-webkit-text-stroke:0.3px #fff">Trainings</div>
<svg style="position:absolute;left:38.7px;top:1144.6px;" width="34" height="34" viewBox="0 0 24 24"><rect x="4.5" y="5" width="15" height="15.5" rx="1.5" fill="#0f172a" stroke="#94a3b8" stroke-width="1.85"/><rect x="5" y="6" width="14" height="2.8" fill="#94a3b8"/><path d="M8.5 3v3M15.5 3v3" stroke="#94a3b8" stroke-width="1.85"/><rect x="11.9" y="12.6" width="4.8" height="4.8" fill="#94a3b8"/></svg>
<div class="t" style="left:95.7px;top:1152.02px;font-size:19.5px;color:#fff;font-weight:normal;-webkit-text-stroke:0.3px #fff">Events</div>
<svg style="position:absolute;left:38.7px;top:1211.3px;" width="34" height="34" viewBox="0 0 24 24"><rect x="4" y="5.5" width="16" height="13" fill="#334155" stroke="#94a3b8" stroke-width="1.75"/><path d="M4 9.8H20M4 14.2H20M8 5.5V18.5" stroke="#94a3b8" stroke-width="1.75"/></svg>
<div class="t" style="left:95.7px;top:1218.72px;font-size:19.5px;color:#fff;font-weight:normal;-webkit-text-stroke:0.3px #fff">Registrations</div>
<svg style="position:absolute;left:38.7px;top:1278.3px;" width="34" height="34" viewBox="0 0 24 24"><circle cx="12" cy="6.1" r="2.6" fill="#94a3b8"/><path d="M12 8 V12.5 L6.5 17.5 M12 12.5 L17.5 17.5" fill="none" stroke="#94a3b8" stroke-width="1.8"/><rect x="3.2" y="15.8" width="5" height="5" fill="#94a3b8"/><rect x="15.8" y="15.8" width="5" height="5" fill="#94a3b8"/></svg>
<div class="t" style="left:95.7px;top:1285.72px;font-size:19.5px;color:#fff;font-weight:normal;-webkit-text-stroke:0.3px #fff">Organization</div>
<svg style="position:absolute;left:38.7px;top:1413.0px;" width="34" height="34" viewBox="0 0 24 24"><rect x="2.5" y="5" width="16" height="10.5" rx="1.2" fill="#334155" stroke="#94a3b8" stroke-width="1.85"/><circle cx="10.5" cy="10.2" r="2.4" fill="#94a3b8"/><path d="M21.2 8 V18.5 H5" fill="none" stroke="#94a3b8" stroke-width="1.9"/></svg>
<div class="t" style="left:95.7px;top:1420.42px;font-size:19.5px;color:#fff;font-weight:normal;-webkit-text-stroke:0.3px #fff">Merchant Settings</div>
<div class="t" style="left:39.4px;top:493.04px;font-size:17.6px;color:#818cf8;font-weight:bold;letter-spacing:0.35px">CLUB</div>
<div class="t" style="left:39.4px;top:1028.04px;font-size:17.6px;color:#818cf8;font-weight:bold;letter-spacing:0.35px">ADMINISTRATION</div>
<div class="t" style="left:39.4px;top:1363.24px;font-size:17.6px;color:#818cf8;font-weight:bold;letter-spacing:0.35px">PAYMENTS</div>
<div style="position:absolute;left:320px;top:546px;width:32px;height:28px;background:#6366f1;border-radius:16px/14px"></div>
<div class="t" style="left:331px;top:551.48px;font-size:16.5px;color:#fff;font-weight:normal;-webkit-text-stroke:0.3px #fff">3</div>
<svg style="position:absolute;left:334px;top:820px;" width="12" height="15" viewBox="0 0 12 15"><path d="M3 2 L9 7.5 L3 13" fill="none" stroke="#94a3b8" stroke-width="2.2"/></svg>
<div style="position:absolute;left:22px;top:1059px;width:184px;height:75px;border:5px solid #ed1c24;box-sizing:border-box"></div>
</body></html>
